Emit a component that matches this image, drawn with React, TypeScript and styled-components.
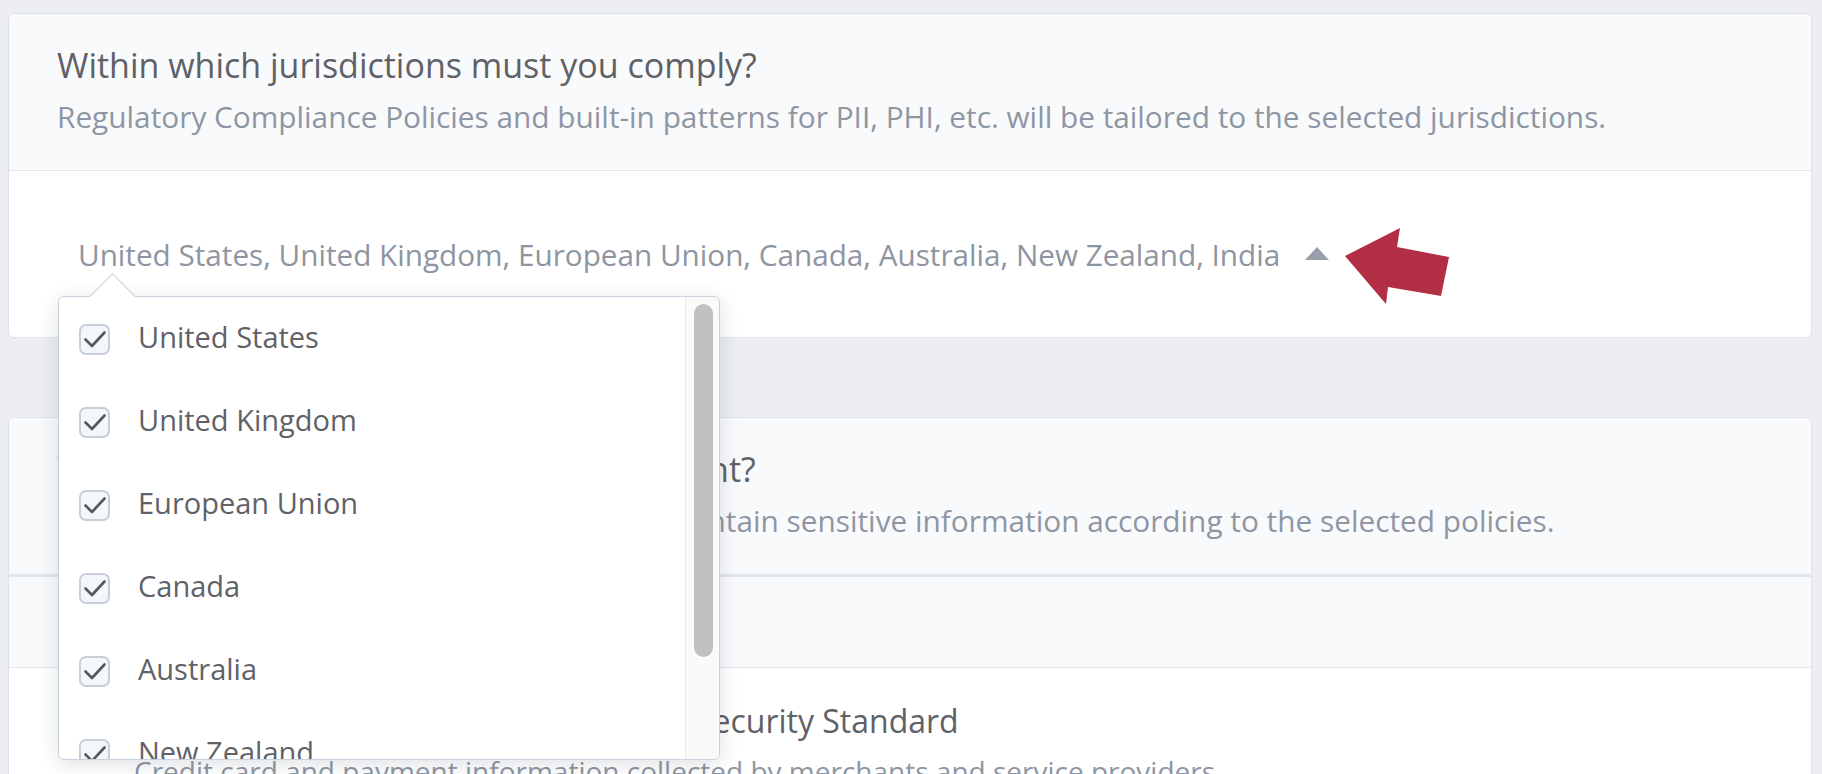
import React from 'react'
import styled, { createGlobalStyle } from 'styled-components'

const GlobalStyle = createGlobalStyle`
  html, body {
    margin: 0;
    height: 100%;
    overflow: hidden;
    background: #eceef3;
  }
  body {
    font-family: 'Open Sans', 'Noto Sans', sans-serif;
  }
`

const Page = styled.main`
  display: flex;
  flex-direction: column;
  gap: 79px;
  padding: 13px 10px 0 8px;
`

const Card = styled.section`
  background: #ffffff;
  border: 1px solid #dde1e8;
  border-radius: 6px;
`

const CardHeader = styled.header<{ $thick?: boolean }>`
  padding: 31px 48px 35px;
  background: #f9fafc;
  border-radius: 6px 6px 0 0;
  border-bottom: ${p => (p.$thick ? '3px' : '1px')} solid #e2e6ed;
`

const Title = styled.h2`
  margin: 0 0 14px;
  font-size: 34px;
  line-height: 40px;
  font-weight: 400;
  color: #5f6166;
  white-space: nowrap;
`

const Subtitle = styled.p`
  margin: 0;
  font-size: 29.8px;
  line-height: 36px;
  color: #8e96a3;
  white-space: nowrap;
`

const CardBody = styled.div`
  padding: 66px 48px 64px;
`

const Select = styled.div`
  position: relative;
  display: inline-flex;
  align-items: center;
  padding-left: 21px;
  cursor: pointer;
`

const SelectValue = styled.span`
  font-size: 29.7px;
  line-height: 36px;
  color: #8d95a2;
  white-space: nowrap;
`

const Caret = styled.span`
  width: 0;
  height: 0;
  margin-left: 25px;
  margin-bottom: 3px;
  border-left: 12.5px solid transparent;
  border-right: 12.5px solid transparent;
  border-bottom: 13px solid #99a0ab;
`

const Pointer = styled.svg`
  position: absolute;
  left: calc(100% + 16px);
  top: -9px;
  width: 105px;
  height: 77px;
`

const Dropdown = styled.div`
  position: absolute;
  left: 1px;
  top: calc(100% + 23px);
  z-index: 10;
  display: flex;
  width: 662px;
  height: 464px;
  box-sizing: border-box;
  background: #ffffff;
  border: 1px solid #c8d2de;
  border-radius: 6px;
  box-shadow: 0 4px 20px rgba(30, 40, 60, 0.14);

  &::before {
    content: '';
    position: absolute;
    left: 37px;
    top: -17px;
    width: 32px;
    height: 32px;
    background: #ffffff;
    border-top: 1px solid #c5d0c8;
    border-left: 1px solid #c5d0c8;
    transform: rotate(45deg);
  }
`

const OptionList = styled.div`
  position: relative;
  flex: 1;
  overflow: hidden;
  padding-top: 1px;
`

const Option = styled.label`
  display: flex;
  align-items: center;
  gap: 28px;
  height: 83px;
  padding-left: 20px;
`

const CheckBox = styled.span`
  display: flex;
  flex-shrink: 0;
  align-items: center;
  justify-content: center;
  width: 31px;
  height: 31px;
  box-sizing: border-box;
  background: #f4f6f9;
  border: 2px solid #c6cfdb;
  border-radius: 7px;
`

const OptionLabel = styled.span`
  padding-bottom: 5px;
  font-size: 29px;
  line-height: 36px;
  color: #5f6267;
  white-space: nowrap;
`

const ScrollTrack = styled.div`
  width: 34px;
  box-sizing: border-box;
  padding: 7px 6px 0 8px;
  background: #fafafa;
  border-left: 1px solid #e7e7e7;
  border-radius: 0 6px 6px 0;
`

const ScrollThumb = styled.div`
  height: 353px;
  background: #c1c1c1;
  border-radius: 10px;
`

const Section = styled.div<{ $tint?: boolean }>`
  min-height: ${p => (p.$tint ? '90px' : '0')};
  background: ${p => (p.$tint ? '#f9fafc' : '#ffffff')};
  border-bottom: ${p => (p.$tint ? '1px solid #e2e6ed' : 'none')};
`

const PolicyRow = styled.div`
  display: flex;
  align-items: flex-start;
  gap: 24px;
  padding: 33px 48px 40px 70px;
`

const PolicyCheck = styled(CheckBox)`
  margin-top: 5px;
`

const PolicyText = styled.div`
  display: flex;
  flex-direction: column;
  gap: 12px;
`

const PolicyTitle = styled.div`
  font-size: 32px;
  line-height: 40px;
  color: #5e6166;
  white-space: nowrap;
`

const PolicyDesc = styled.div`
  font-size: 28px;
  line-height: 36px;
  color: #8e96a3;
  white-space: nowrap;
`

const jurisdictions = [
  'United States',
  'United Kingdom',
  'European Union',
  'Canada',
  'Australia',
  'New Zealand',
  'India',
]

const Check = () => (
  <svg width="24" height="20" viewBox="0 0 24 20" fill="none">
    <path d="M2.5 9.5 L9 16 L21.5 2.5" stroke="#55585c" strokeWidth="2.6" strokeLinecap="round" strokeLinejoin="round" />
  </svg>
)

export default function App() {
  return (
    <>
      <GlobalStyle />
      <Page>
        <Card>
          <CardHeader>
            <Title>Within which jurisdictions must you comply?</Title>
            <Subtitle>
              Regulatory Compliance Policies and built-in patterns for PII, PHI, etc. will be tailored to the selected
              jurisdictions.
            </Subtitle>
          </CardHeader>
          <CardBody>
            <Select>
              <SelectValue>{jurisdictions.join(', ')}</SelectValue>
              <Caret />
              <Pointer viewBox="0 0 105 77">
                <polygon points="0,28 55,0 52,19 104,29 96,68 43,59 41,76" fill="#b22e45" />
              </Pointer>
              <Dropdown>
                <OptionList>
                  {jurisdictions.map(j => (
                    <Option key={j}>
                      <CheckBox>
                        <Check />
                      </CheckBox>
                      <OptionLabel>{j}</OptionLabel>
                    </Option>
                  ))}
                </OptionList>
                <ScrollTrack>
                  <ScrollThumb />
                </ScrollTrack>
              </Dropdown>
            </Select>
          </CardBody>
        </Card>

        <Card>
          <CardHeader $thick>
            <Title>Which policies pertain to your environment?</Title>
            <Subtitle>
              Columns in your tables will be tagged if they contain sensitive information according to the selected
              policies.
            </Subtitle>
          </CardHeader>
          <Section $tint />
          <Section>
            <PolicyRow>
              <PolicyCheck>
                <Check />
              </PolicyCheck>
              <PolicyText>
                <PolicyTitle>PCI DSS: Payment Card Industry Data Security Standard</PolicyTitle>
                <PolicyDesc>
                  Credit card and payment information collected by merchants and service providers
                </PolicyDesc>
              </PolicyText>
            </PolicyRow>
          </Section>
        </Card>
      </Page>
    </>
  )
}
